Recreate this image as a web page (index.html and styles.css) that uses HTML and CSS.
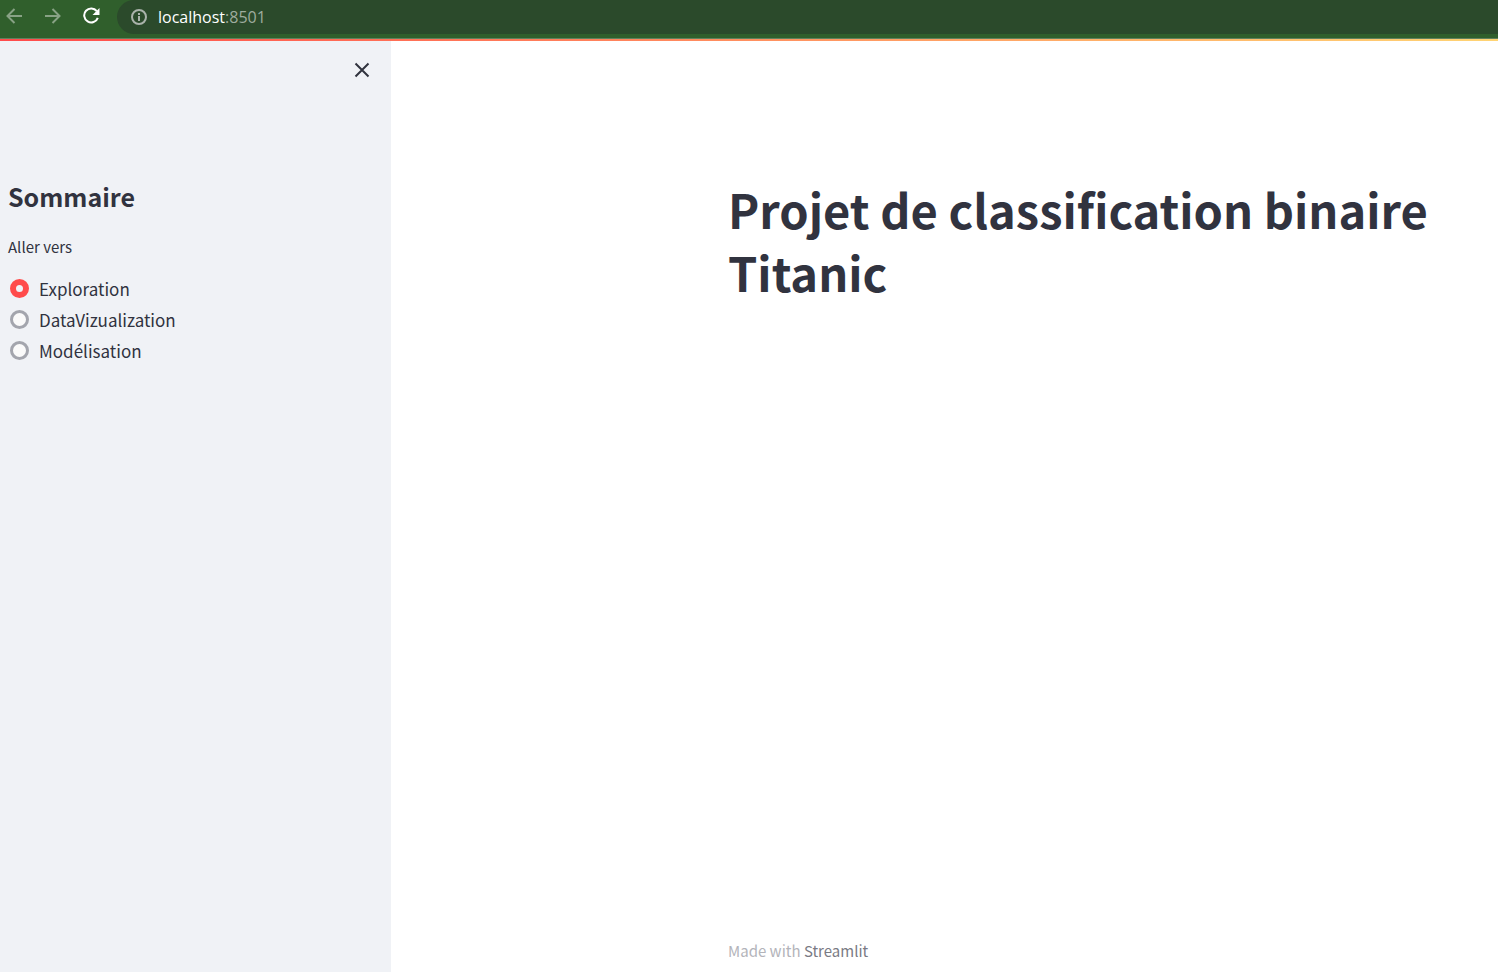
FILE: index.html
```html
<!DOCTYPE html>
<html lang="fr">
<head>
<meta charset="utf-8">
<title>Projet de classification binaire Titanic</title>
<link rel="stylesheet" href="styles.css">
</head>
<body>
<header class="toolbar">
  <button class="tool dim" type="button" aria-label="Back">
    <svg width="18" height="18" viewBox="0 0 18 18"><path d="M17 9H3M9.500 2L2.500 9L9.500 16"/></svg>
  </button>
  <button class="tool dim" type="button" aria-label="Forward">
    <svg width="18" height="18" viewBox="0 0 18 18"><path d="M1 9H15M8.500 2L15.500 9L8.500 16"/></svg>
  </button>
  <button class="tool" type="button" aria-label="Reload">
    <svg width="18" height="18" viewBox="0 0 18 18"><path d="M13.800 4.200A7 7 0 1 0 14.800 10.800"/><path class="solid" d="M16.500 1V8H9.500Z"/></svg>
  </button>
  <div class="address">
    <svg width="16" height="16" viewBox="0 0 16 16"><circle cx="8" cy="8" r="7"/><path d="M8 7V12M8 4V6"/></svg>
    <span class="url"><b>localhost</b>:8501</span>
  </div>
</header>
<div class="decoration"></div>
<div class="app">
  <aside class="sidebar">
    <button class="close" type="button" aria-label="Close">
      <svg width="16" height="16" viewBox="0 0 16 16"><path d="M1.500 1.500L14.500 14.500M14.500 1.500L1.500 14.500"/></svg>
    </button>
    <h2 class="heading">Sommaire</h2>
    <fieldset class="choices">
      <legend>Aller vers</legend>
      <label class="choice"><input type="radio" name="page" checked>Exploration</label>
      <label class="choice"><input type="radio" name="page">DataVizualization</label>
      <label class="choice"><input type="radio" name="page">Modélisation</label>
    </fieldset>
  </aside>
  <main class="main">
    <h1 class="title">Projet de classification binaire Titanic</h1>
    <footer class="footer">Made with <a href="#">Streamlit</a></footer>
  </main>
</div>
</body>
</html>
```
FILE: styles.css
```css
* { box-sizing: border-box; }
body {
  margin: 0;
  min-height: 100vh;
  display: flex;
  flex-direction: column;
  background: #fff;
  color: #31333f;
  font-family: "Noto Sans CJK JP", "Source Sans Pro", sans-serif;
}
button { border: 0; padding: 0; background: none; }
svg { display: block; fill: none; stroke: currentColor; stroke-width: 2; }
.solid { fill: currentColor; stroke: none; }

.toolbar {
  display: flex;
  align-items: flex-start;
  height: 39px;
  padding-left: 5px;
  background: #305f2c;
  border-bottom: 1px solid #60815d;
}
.tool { width: 18px; margin: 7px 21px 0 0; color: #fff; }
.tool.dim { color: #88a285; }
.address {
  flex: 1;
  display: flex;
  align-items: center;
  gap: 11px;
  height: 34px;
  margin-left: -5px;
  padding-left: 14px;
  background: #2b4a2b;
  border-radius: 17px 0 0 17px;
  color: #aab3ab;
}
.url { font: 16px/24px "Open Sans", sans-serif; color: #9eac9e; }
.url b { font-weight: 400; color: #fff; }
.decoration { height: 2px; background: linear-gradient(90deg, #ff4b4b, #fffd80); background-size: 130% 100%; }

.app { flex: 1; display: flex; }
.sidebar {
  flex: 0 0 391px;
  display: flex;
  flex-direction: column;
  padding: 21px 8px 0;
  background: #f0f2f6;
}
.close { align-self: flex-end; margin-right: 13px; color: #31333f; }
.heading { margin: 100px 0 0; font-size: 25px; line-height: 36px; font-weight: 700; }
.choices { margin: 21px 0 0; padding: 0; border: 0; }
.choices legend { padding: 0; margin-bottom: 14px; font-size: 15px; line-height: 24px; }
.choice { display: flex; align-items: center; gap: 10px; height: 31px; padding-left: 2px; font-size: 17px; }
.choice input {
  appearance: none;
  width: 19px;
  height: 19px;
  margin: 0;
  border: 3px solid #a3a5ad;
  border-radius: 50%;
  background: #fafafa;
}
.choice input:checked { border: 6px solid #ff4b4b; background: #f0f2f6; }
.main {
  flex: 1;
  display: flex;
  flex-direction: column;
  justify-content: space-between;
  padding: 136px 0 9px 337px;
}
.title { margin: 0; font-size: 47px; line-height: 63px; font-weight: 700; }
.footer { font-size: 15px; line-height: 24px; color: #b3b4ba; }
.footer a { color: #7a7b84; text-decoration: none; }
```
